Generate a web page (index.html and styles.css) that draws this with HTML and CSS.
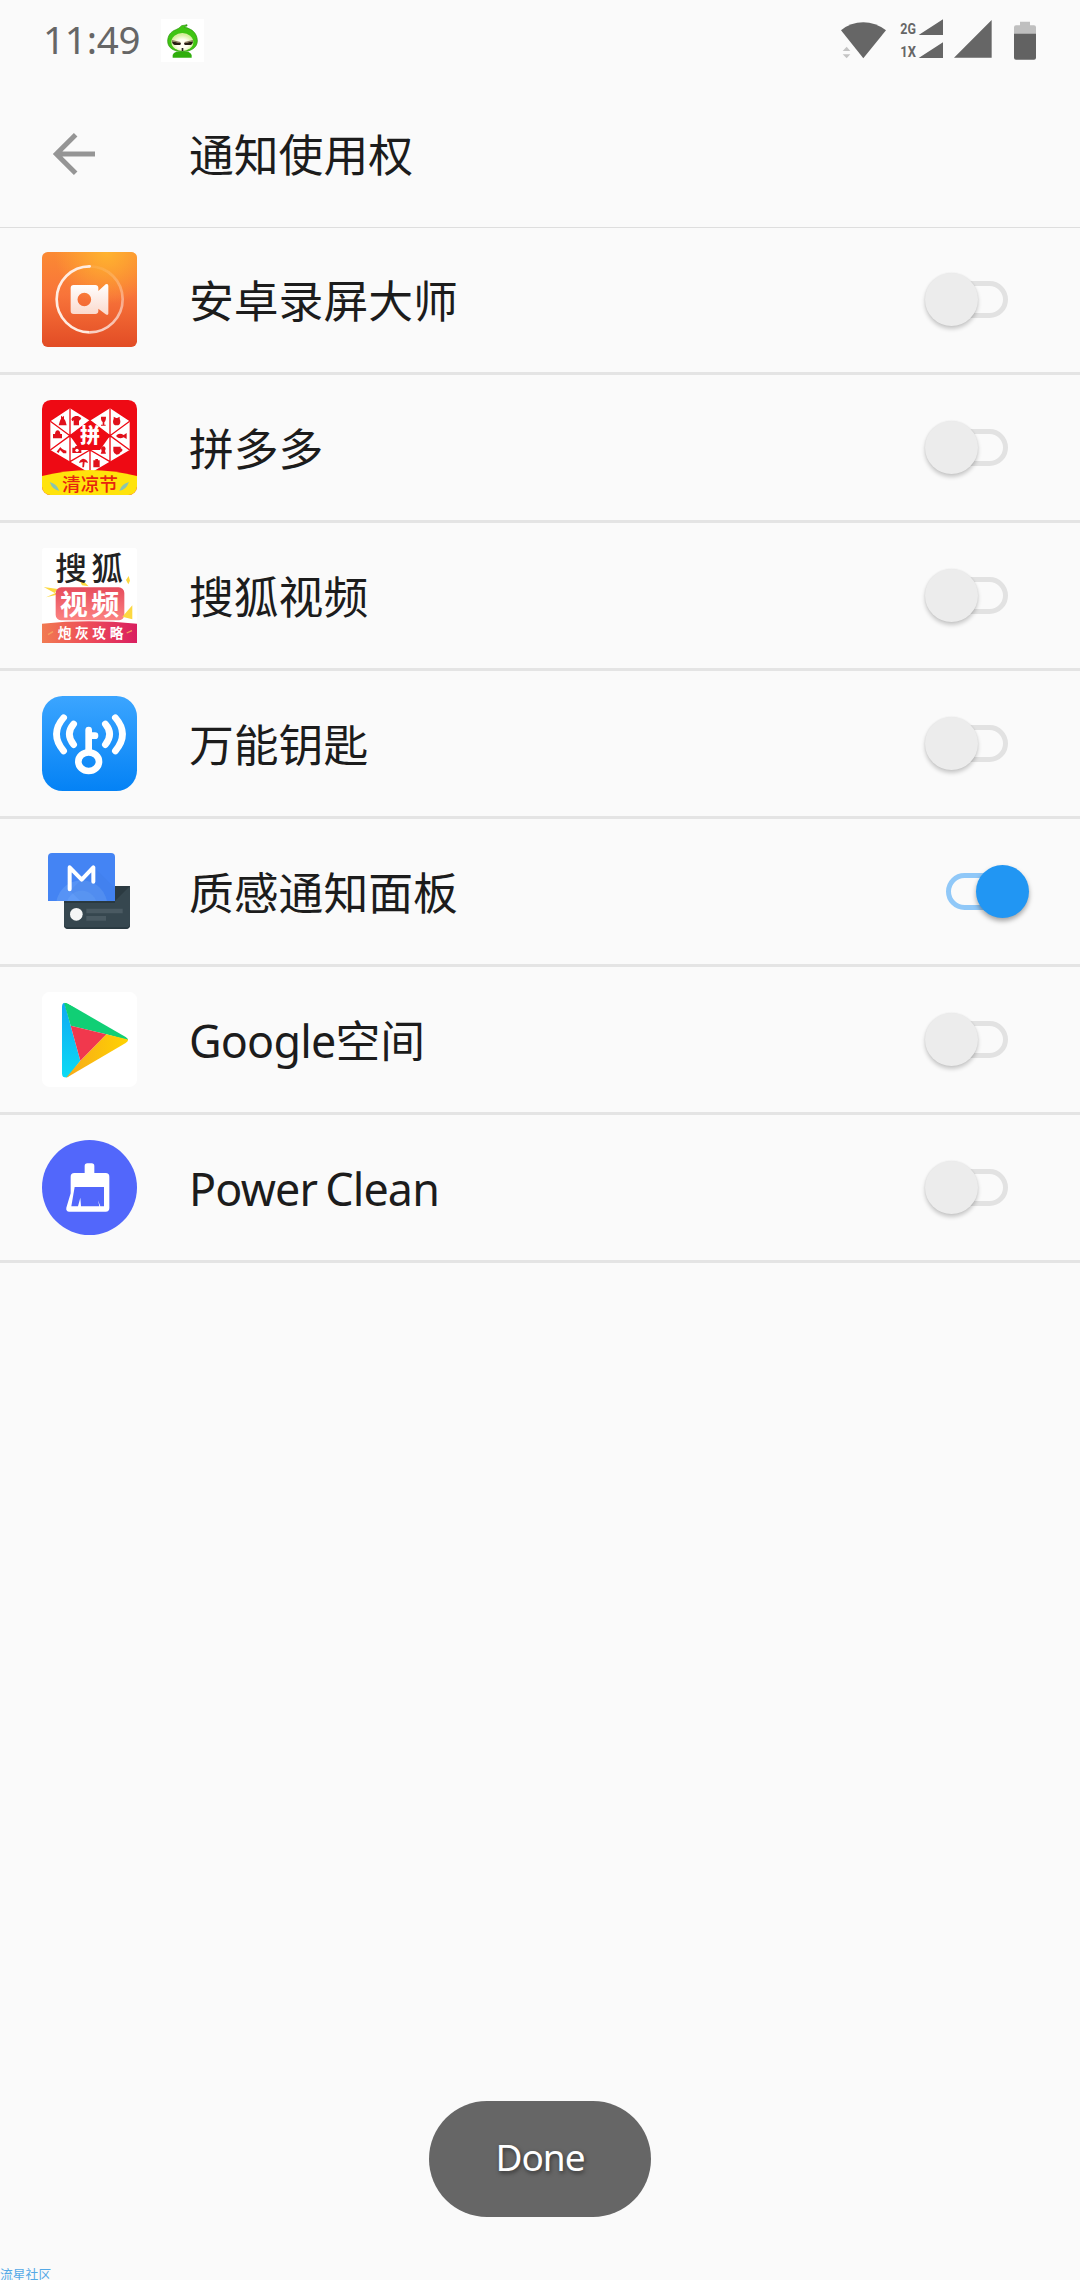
FILE: index.html
```
<!DOCTYPE html>
<html lang="zh-CN">
<head>
    <meta charset="UTF-8">
    <meta name="viewport" content="width=device-width, initial-scale=1.0">
    <title>通知使用权</title>
    <link rel="stylesheet" href="styles.css">
</head>
<body>
    <div class="status">
        <span class="time">11:49</span>
        <svg class="pet" viewBox="0 0 129 129">
            <defs>
                <radialGradient id="face" cx=".5" cy=".6" r=".5">
                    <stop offset=".5" stop-color="#fffff0"/>
                    <stop offset="1" stop-color="#d8efa0"/>
                </radialGradient>
            </defs>
            <rect width="129" height="129" fill="#fff"/>
            <path d="M35 116V108Q37 101 46 98H82Q90 102 92 108V116Z" fill="#2fae0c"/>
            <path d="M78 17Q71 19 62 20Q54 29 45 32C28 38 20 51 20 67C20 87 40 98 64 98C89 98 109 86 109 66C109 51 101 37 88 31Q78 25 70 25Q74 21 78 21Z" fill="#3fc512" stroke="#258f08" stroke-width="2"/>
            <ellipse cx="64" cy="69" rx="33" ry="27" fill="url(#face)"/>
            <path d="M33 67L60 72L58 78H41Q34 77 33 67ZM96 67L69 72L71 78H89Q95 77 96 67Z" fill="#271e12"/>
            <path d="M33 65L58 71M96 65L71 71" stroke="#8a7a5c" stroke-width="4"/>
            <path d="M62 87H67V96H62Z" fill="#222"/>
        </svg>
        <svg class="signals" viewBox="0 0 600 129">
            <path d="M3 34Q32 10 70 10Q106 10 138 34L70 118Z" fill="#666"/>
            <path d="M8 96L20 83L31 96ZM8 106H31L20 118Z" fill="#c4c4c4"/>
            <text class="net" x="181" y="46" textLength="47" lengthAdjust="spacingAndGlyphs">2G</text>
            <text class="net" x="181" y="115" textLength="47" lengthAdjust="spacingAndGlyphs">1X</text>
            <path d="M236 48L309 1V48ZM236 117L309 70V117ZM342 116L455 3V116Z" fill="#666"/>
            <path d="M540 8H570V19H582Q588 19 588 25V46H522V25Q522 19 528 19H540Z" fill="#bfbfbf"/>
            <path d="M522 44H588V116Q588 122 582 122H528Q522 122 522 116Z" fill="#626262"/>
        </svg>
    </div>
    <div class="header">
        <svg class="back" viewBox="0 0 126 126">
            <path d="M68 5L10 63L68 121M10 63H126" fill="none" stroke="#959595" stroke-width="15"/>
        </svg>
        <h1 class="title">通知使用权</h1>
    </div>
    <ul class="list">
        <li class="item">
            <svg class="icon" viewBox="126 66 285 285">
                <defs>
                    <linearGradient id="rec" x1="0" y1="0" x2="0" y2="1">
                        <stop offset="0" stop-color="#fb8a33"/>
                        <stop offset=".45" stop-color="#f8743a"/>
                        <stop offset="1" stop-color="#e24c25"/>
                    </linearGradient>
                    <radialGradient id="glow" cx=".68" cy="0" r=".55">
                        <stop offset="0" stop-color="#ffb32f"/>
                        <stop offset="1" stop-color="#ffb32f" stop-opacity="0"/>
                    </radialGradient>
                    <linearGradient id="cam" x1="0" y1="0" x2="0" y2="1">
                        <stop offset="0" stop-color="#fff"/>
                        <stop offset="1" stop-color="#fbd9cc"/>
                    </linearGradient>
                    <linearGradient id="ring" x1="0" y1="0" x2="0" y2="1">
                        <stop offset="0" stop-color="#fff" stop-opacity=".08"/>
                        <stop offset="1" stop-color="#fff" stop-opacity=".72"/>
                    </linearGradient>
                </defs>
                <rect x="126" y="66" width="285" height="285" rx="17" fill="url(#rec)"/>
                <rect x="126" y="66" width="285" height="285" rx="17" fill="url(#glow)"/>
                <path d="M269 109A99 99 0 0 1 269 307" fill="none" stroke="url(#ring)" stroke-width="8"/>
                <path d="M269 109A99 99 0 0 0 269 307" fill="none" stroke="#ffece1" stroke-width="8"/>
                <circle cx="269" cy="109" r="4" fill="#ffece1"/>
                <path fill-rule="evenodd" fill="url(#cam)" d="M221 165H286Q294 165 295 173V183L317 163Q325 160 325 168V251Q324 257 317 253L295 236V244Q294 252 286 252H221Q212 252 212 243V174Q212 165 221 165ZM253 188A20 20 0 1 0 253 229A20 20 0 1 0 253 188Z"/>
            </svg>
            <span class="name">安卓录屏大师</span>
            <span class="switch"><i></i></span>
        </li>
        <li class="item">
            <svg class="icon" viewBox="36 30 285 285">
                <defs>
                    <clipPath id="pdd"><rect x="36" y="30" width="285" height="285" rx="26"/></clipPath>
                </defs>
                <g clip-path="url(#pdd)">
                    <rect x="36" y="30" width="285" height="285" fill="#ee0a14"/>
                    <path d="M120 55L180 92L240 55L299 94V180L180 250L61 180V94Z" fill="#fff"/>
                    <path d="M120 55V217M240 55V217M61 94L120 137L180 92L240 137L299 94M61 180L120 137L180 180L240 137L299 180M120 215L180 180L240 215M180 180V250" fill="none" stroke="#ee0a14" stroke-width="4"/>
                    <path d="M180 92L240 137L210 180H150L120 137Z" fill="#ee0a14"/>
                    <path d="M93 77V86L90 92L86 106H110L106 92L102 86V77L98 81ZM128 82L136 78H144L154 84L149 92L147 90V106H131V91L127 94L124 88ZM213 80H228Q228 93 223 96V104H227V107H213V104H218V96Q212 92 213 80Z" fill="#e0101b"/>
                    <circle cx="260" cy="95" r="11" fill="#e0101b"/><path d="M251 80L260 85L269 80V89H251Z" fill="#e0101b"/>
                    <path d="M69 145V132H75Q76 121 83 121T91 132H96V145ZM80 185L91 171Q94 178 109 182V190H100L90 180L86 189ZM127 173H134L137 168H145L148 173H154V189H127ZM258 138Q267 126 281 135L290 129V147L281 142Q267 149 258 138Z" fill="#e0101b"/>
                    <path d="M250 170H272V175Q280 177 276 184L272 186Q269 194 260 194Q251 191 250 183ZM213 176Q214 169 220 169T227 176L225 183L228 191H212L215 183ZM147 219Q149 209 159 206Q171 207 174 219L164 216L162 232H157L158 216ZM190 211H196V207H204V211H209V232H190Z" fill="#e0101b"/>
                    <circle cx="141" cy="181" r="5" fill="#fff"/>
                    <text class="pin" x="180" y="159">拼</text>
                    <path d="M36 258Q180 222 321 258V315H36Z" fill="#ffe30c"/>
                    <path d="M59 276Q80 281 88 302Q68 301 59 276ZM297 276Q276 281 268 302Q288 301 297 276Z" fill="#8ac5b0"/>
                    <text class="cool" x="180" y="303">清凉节</text>
                </g>
            </svg>
            <span class="name">拼多多</span>
            <span class="switch"><i></i></span>
        </li>
        <li class="item">
            <svg class="icon" viewBox="36 25 285 285">
                <defs>
                    <linearGradient id="sohu"><stop offset="0" stop-color="#f17a51"/><stop offset=".5" stop-color="#ed4b59"/><stop offset="1" stop-color="#d91f60"/></linearGradient>
                    <linearGradient id="video" x1="0" y1="0" x2="0" y2="1"><stop offset="0" stop-color="#e64c5c"/><stop offset="1" stop-color="#fc8381"/></linearGradient>
                </defs>
                <rect x="36" y="25" width="285" height="285" rx="8" fill="#fff"/>
                <path d="M41 142L83 148L74 160ZM48 173L98 150L88 164ZM140 105L176 140L156 137ZM288 121L296 109L300 123L295 134Z" fill="#fcd840"/>
                <rect x="77" y="143" width="206" height="99" rx="17" fill="url(#video)"/>
                <path d="M277 231L307 197V239L292 235Z" fill="#fcd840"/>
                <text class="fox" x="184" y="121">搜狐</text>
                <text class="film" x="184" y="226">视频</text>
                <path d="M36 252Q176 238 321 252V310H36Z" fill="url(#sohu)"/>
                <path d="M54 285L69 276M290 280L306 273" stroke="#f5a060" stroke-width="4"/>
                <text class="guide" x="187" y="294">炮灰攻略</text>
            </svg>
            <span class="name">搜狐视频</span>
            <span class="switch"><i></i></span>
        </li>
        <li class="item">
            <svg class="icon" viewBox="36 33 285 285">
                <defs>
                    <linearGradient id="wifi" x1="0" y1="0" x2="0" y2="1"><stop offset="0" stop-color="#3ba5ff"/><stop offset="1" stop-color="#0482f5"/></linearGradient>
                </defs>
                <rect x="36" y="33" width="285" height="285" rx="62" fill="url(#wifi)"/>
                <g fill="none" stroke="#fff" stroke-width="20" stroke-linecap="round">
                    <path d="M101 98Q58 147 101 198M131 117Q105 147 131 179M226 117Q252 147 226 179M256 98Q299 147 256 198"/>
                    <path d="M176 135V200M176 152H195"/>
                    <ellipse cx="176" cy="230" rx="31" ry="28"/>
                </g>
            </svg>
            <span class="name">万能钥匙</span>
            <span class="switch"><i></i></span>
        </li>
        <li class="item">
            <svg class="icon" viewBox="36 27 285 285">
                <defs>
                    <clipPath id="card"><path d="M66 54H243Q255 54 255 66V198H54V66Q54 54 66 54Z"/></clipPath>
                </defs>
                <path d="M102 153H300V270Q300 282 288 282H114Q102 282 102 270Z" fill="#36474f"/>
                <path d="M255 153H300L255 198Z" fill="#2b3a41"/>
                <path d="M102 198H255V204H102ZM114 282H288Q300 280 300 270V266Q298 277 288 277H114Q104 277 102 266V270Q102 280 114 282Z" fill="#293940"/>
                <g clip-path="url(#card)">
                    <rect x="54" y="54" width="201" height="144" fill="#4484f4"/>
                    <circle cx="155" cy="213" r="77" fill="#5793f5"/>
                    <circle cx="155" cy="213" r="46" fill="#609bf7"/>
                    <path d="M120 167L192 97L255 160V198H151Z" fill="#3e78db" opacity=".2"/>
                </g>
                <path d="M119 163V97L155 134L190 97V140" fill="none" stroke="#fff" stroke-width="12" stroke-linecap="round" stroke-linejoin="round"/>
                <circle cx="139" cy="238" r="19" fill="#f5f6f6"/>
                <path d="M169 221H278V235H169ZM169 243H228V257H169Z" fill="#4a5a62"/>
            </svg>
            <span class="name">质感通知面板</span>
            <span class="switch on"><i></i></span>
        </li>
        <li class="item">
            <svg class="icon" viewBox="36 36 285 285">
                <defs>
                    <clipPath id="play"><path d="M96 79Q97 64 112 70L287 171Q301 180 287 189L112 292Q97 295 96 281Z"/></clipPath>
                    <linearGradient id="blue" x1="0" y1="0" x2="0" y2="1"><stop offset="0" stop-color="#12a7f3"/><stop offset="1" stop-color="#0bdcf4"/></linearGradient>
                    <linearGradient id="gold" x1="0" y1="0" x2="1" y2="0"><stop offset="0" stop-color="#f7a81a"/><stop offset="1" stop-color="#ffd500"/></linearGradient>
                </defs>
                <rect x="36" y="36" width="285" height="285" rx="22" fill="#fff"/>
                <g clip-path="url(#play)">
                    <path d="M95 60V300H108L151 242L122 137L104 70Z" fill="url(#blue)"/>
                    <path d="M101 64L122 137L229 163L305 184V170Z" fill="#10cf75"/>
                    <path d="M103 300L151 242L229 163L305 181V195Z" fill="url(#gold)"/>
                    <path d="M122 137L229 163L151 242Z" fill="#f1384d"/>
                </g>
            </svg>
            <span class="name"><span class="en">Google</span>空间</span>
            <span class="switch"><i></i></span>
        </li>
        <li class="item">
            <svg class="icon" viewBox="36 30 285 285">
                <circle cx="178.500" cy="172.500" r="142.500" fill="#5267fb"/>
                <path fill-rule="evenodd" fill="#fff" d="M164 129V108Q164 100 172 100H185Q193 100 193 108V129H227Q238 129 238 140V234Q238 245 227 245H118Q107 244 109 233L122 190V140Q122 129 133 129ZM134 171L124 229H144L151 203L153 229H208L204 211L211 229H222V171Z"/>
            </svg>
            <span class="name en">Power Clean</span>
            <span class="switch"><i></i></span>
        </li>
    </ul>
    <div class="btn">Done</div>
    <div class="mark">流星社区</div>
</body>
</html>
```
FILE: styles.css
```
* {
    padding: 0;
    margin: 0;
    list-style: none;
    box-sizing: border-box;
}
body {
    display: flex;
    flex-direction: column;
    width: 1080px;
    height: 2280px;
    overflow: hidden;
    background-color: #fafafa;
    color: #1c1c1c;
    font-family: "Noto Sans", "Noto Sans CJK SC", sans-serif;
}
svg {
    display: block;
    flex: none;
    overflow: visible;
}
.status {
    display: flex;
    align-items: flex-start;
    height: 80px;
    padding: 19px 40px 0 43px;
}
.time {
    width: 118px;
    margin-top: -2px;
    font-size: 38.500px;
    line-height: 44px;
    letter-spacing: -0.2px;
    color: #666;
}
.pet {
    width: 43px;
    height: 43px;
}
.signals {
    width: 200px;
    height: 43px;
    margin-left: auto;
}
.net {
    font: bold 46px Roboto, sans-serif;
    fill: #666;
}
.header {
    display: flex;
    align-items: center;
    height: 148px;
    padding-left: 53px;
    border-bottom: 1px solid #dedede;
}
.back {
    width: 42px;
    height: 42px;
}
.title {
    margin-left: 94px;
    padding-top: 2px;
    font-size: 44.800px;
    font-weight: 400;
    line-height: 60px;
}
.list {
    margin-top: -1px;
}
.item {
    display: flex;
    align-items: center;
    height: 148px;
    padding: 0 51px 0 42px;
    border-bottom: 3px solid #e4e4e4;
}
.icon {
    width: 95px;
    height: 95px;
}
.name {
    margin-left: 52px;
    padding-top: 2px;
    font-size: 44.800px;
    line-height: 60px;
}
.en {
    letter-spacing: -0.8px;
    word-spacing: -3px;
}
/* 开关 */
.switch {
    display: flex;
    align-items: center;
    width: 83px;
    height: 53px;
    margin-left: auto;
    margin-right: 21px;
}
.switch i {
    flex: none;
    position: relative;
    z-index: 1;
    width: 53px;
    height: 53px;
    border-radius: 50%;
    background-color: #ececec;
    box-shadow: 0 3px 4px rgba(0, 0, 0, 0.2), 0 0 2px rgba(0, 0, 0, 0.08);
}
.switch::after {
    content: "";
    flex: none;
    box-sizing: border-box;
    width: 62px;
    height: 37px;
    margin-left: -32px;
    border: 5px solid #e2e2e2;
    border-radius: 19px;
}
.switch.on {
    flex-direction: row-reverse;
    margin-right: 0;
}
.switch.on i {
    background-color: #2196f3;
    box-shadow: 0 3px 5px rgba(0, 0, 0, 0.35);
}
.switch.on::after {
    margin: 0 -32px 0 0;
    border-color: #90c8f8;
}
/* 图标里的文字 */
.icon text {
    font-family: "Noto Sans CJK SC", sans-serif;
    font-weight: bold;
    text-anchor: middle;
}
.icon .pin {
    font-size: 60px;
    font-weight: 900;
    fill: #fff;
}
.icon .cool {
    font-size: 56px;
    font-weight: 500;
    fill: #e7240f;
}
.icon .fox {
    font-size: 95px;
    font-weight: 500;
    letter-spacing: 13px;
    fill: #222;
}
.icon .film {
    font-size: 84px;
    letter-spacing: 11px;
    fill: #fff;
}
.icon .guide {
    font-size: 41px;
    letter-spacing: 11px;
    fill: #fff;
}
.btn {
    width: 222px;
    height: 116px;
    margin: auto auto 0;
    border-radius: 58px;
    background-color: #666;
    color: #fff;
    font-size: 37px;
    line-height: 111px;
    letter-spacing: -1px;
    text-align: center;
    text-shadow: 1px 2px 4px rgba(0, 0, 0, 0.5);
}
.mark {
    height: 14px;
    margin-top: 49px;
    font-size: 12.800px;
    line-height: 16px;
    color: #55a9e6;
}
```
